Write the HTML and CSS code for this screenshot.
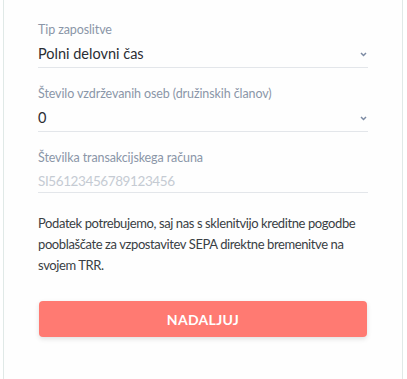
FILE: index.html
```html
<!DOCTYPE html>
<html lang="sl">
<head>
    <meta charset="UTF-8">
    <meta name="viewport" content="width=device-width, initial-scale=1.0">
    <title>Podatki o zaposlitvi</title>
    <link rel="stylesheet" href="styles.css">
</head>
<body>

<div class="card">
    <div class="field">
        <label class="field-label">Tip zaposlitve</label>
        <div class="field-input select">
            <span>Polni delovni čas</span>
            <svg class="chevron" width="7" height="5" viewBox="0 0 7 5"><path d="M1 1 L3.5 3.5 L6 1" fill="none" stroke="#7c8aa3" stroke-width="1.5"/></svg>
        </div>
    </div>

    <div class="field">
        <label class="field-label">Število vzdrževanih oseb (družinskih članov)</label>
        <div class="field-input select">
            <span>0</span>
            <svg class="chevron" width="7" height="5" viewBox="0 0 7 5"><path d="M1 1 L3.5 3.5 L6 1" fill="none" stroke="#7c8aa3" stroke-width="1.5"/></svg>
        </div>
    </div>

    <div class="field">
        <label class="field-label">Številka transakcijskega računa</label>
        <div class="field-input text">
            <span class="placeholder">SI56123456789123456</span>
        </div>
    </div>

    <p class="note">Podatek potrebujemo, saj nas s sklenitvijo kreditne pogodbe pooblaščate za vzpostavitev SEPA direktne bremenitve na svojem TRR.</p>

    <button class="continue-btn">NADALJUJ</button>
</div>

</body>
</html>
```

FILE: styles.css
```css
body {
    margin: 0;
    background-color: #ffffff;
    font-family: "Source Sans Pro", Lato, "Open Sans", sans-serif;
}

.card {
    margin: 0 4px 0 3px;
    height: 379px;
    box-sizing: border-box;
    border-left: 1px solid #e0e9e7;
    border-right: 1px solid #e0e9e7;
    background: #fefefe;
    padding: 22px 34px 0 34px;
}

.field {
    margin-bottom: 18px;
}

.field-label {
    display: block;
    font-size: 12.5px;
    line-height: 16px;
    letter-spacing: -0.1px;
    color: #8b96a8;
}

.field-input {
    display: flex;
    justify-content: space-between;
    align-items: center;
    border-bottom: 1px solid #e3e6ea;
    padding: 6px 0 3px;
    font-size: 14.5px;
    line-height: 20px;
    color: #2a2d33;
}

.field-input.text {
    padding: 5px 0 1px;
}

.chevron {
    margin-right: 1px;
}

.placeholder {
    font-size: 13.5px;
    letter-spacing: -0.4px;
    color: #c5cbd3;
}

.note {
    margin: 20px 0 0;
    font-size: 13px;
    line-height: 21px;
    letter-spacing: -0.4px;
    color: #3a3e44;
}

.continue-btn {
    display: block;
    width: 328px;
    height: 36px;
    margin: 25px 0 0 1px;
    border: none;
    border-radius: 4px;
    background-color: #ff7a72;
    color: white;
    font-family: inherit;
    font-size: 14px;
    font-weight: bold;
    letter-spacing: 0.3px;
    box-shadow: 0 2px 5px rgba(0, 0, 0, 0.12);
    cursor: pointer;
}
```
